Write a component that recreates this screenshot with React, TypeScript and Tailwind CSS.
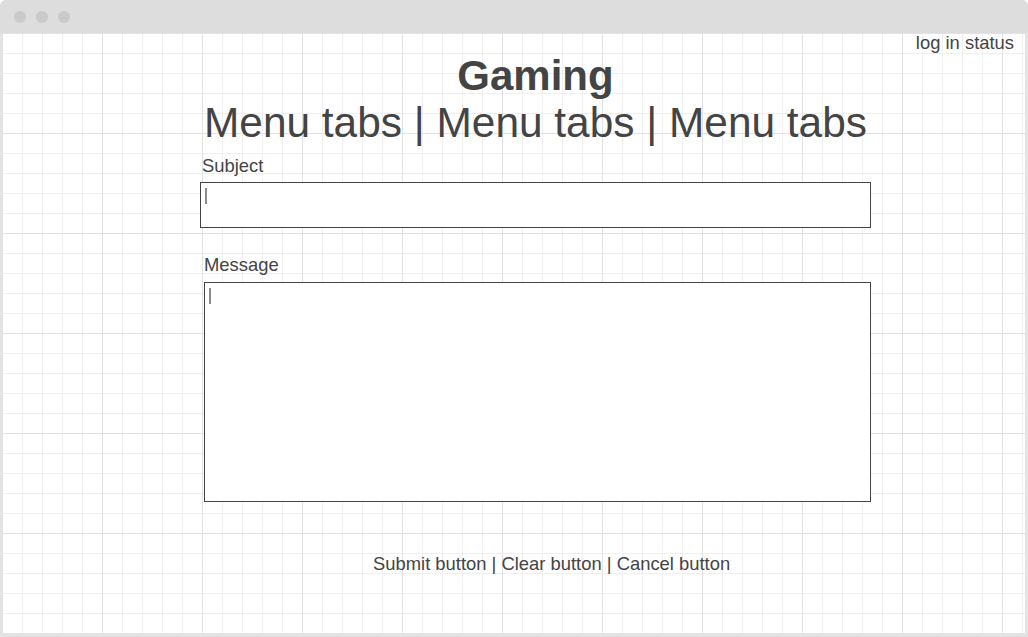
export default function App() {
  return (
    <div className="w-[1028px] h-[637px] bg-white font-['Liberation_Sans',Arial,sans-serif] text-[#444444]">
      <div className="w-full h-full flex flex-col rounded-t-[6px] bg-[#e3e3e3] overflow-hidden">
        {/* title bar */}
        <div className="h-[33px] shrink-0 bg-[#dddddd] flex items-center gap-[10px] pl-[14px]">
          <div className="w-[12px] h-[12px] rounded-full bg-[#cacaca]" />
          <div className="w-[12px] h-[12px] rounded-full bg-[#cacaca]" />
          <div className="w-[12px] h-[12px] rounded-full bg-[#cacaca]" />
        </div>

        {/* canvas */}
        <div className="ml-[2px] mr-[3px] h-[600px] bg-white bg-[linear-gradient(to_right,#e2e2e2_1px,transparent_1px),linear-gradient(to_bottom,#e2e2e2_1px,transparent_1px),linear-gradient(to_right,#efefef_1px,transparent_1px),linear-gradient(to_bottom,#efefef_1px,transparent_1px)] bg-[size:100px_100px,100px_100px,20px_20px,20px_20px]">
          <div className="flex justify-end pr-[11px] h-[19px] text-[18.4px] leading-[19px]">log in status</div>

          <div className="w-[671px] ml-[198px] flex flex-col">
            <h1 className="text-center text-[42px] leading-[47px] font-bold">Gaming</h1>
            <div className="text-center text-[42.4px] leading-[47px]">Menu tabs | Menu tabs | Menu tabs</div>

            <label className="mt-[10px] pl-[2px] text-[18.4px] leading-[19px]">Subject</label>
            <div className="mt-[7px] h-[46px] border border-[#444444] bg-white pl-[4px] pt-[5px]">
              <div className="w-[2px] h-[16px] bg-[#8c8c8c]" />
            </div>
          </div>

          <div className="w-[667px] ml-[202px] flex flex-col">
            <label className="mt-[27px] text-[18.4px] leading-[19px]">Message</label>
            <div className="mt-[8px] h-[220px] border border-[#444444] bg-white pl-[4px] pt-[5px]">
              <div className="w-[2px] h-[16px] bg-[#8c8c8c]" />
            </div>
          </div>

          <div className="mt-[52px] pl-[371px] text-[18.4px] leading-[19px]">
            Submit button | Clear button | Cancel button
          </div>
        </div>
      </div>
    </div>
  );
}
